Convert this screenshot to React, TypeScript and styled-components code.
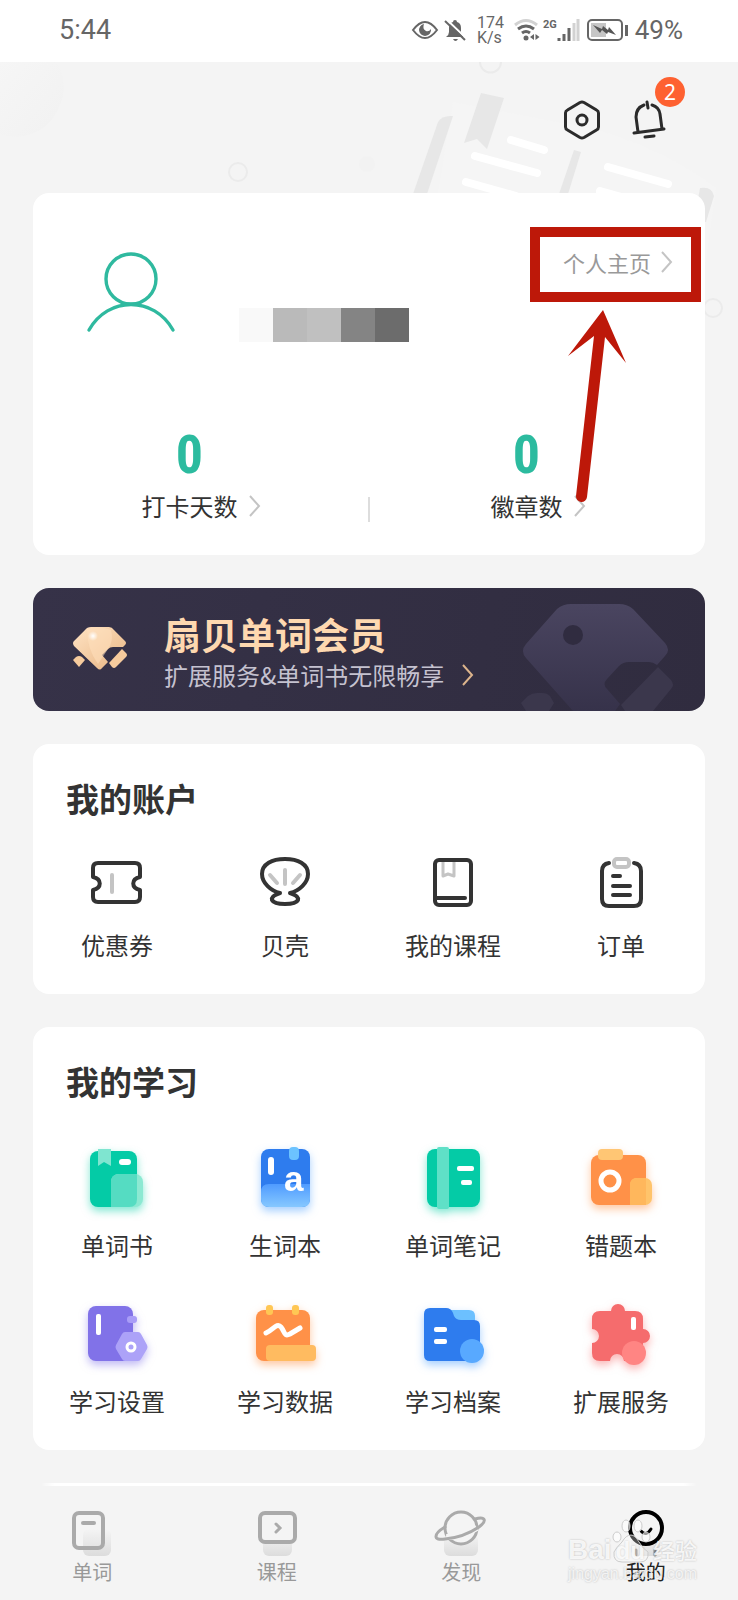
import React from 'react';
import styled, { createGlobalStyle } from 'styled-components';

const GlobalStyle = createGlobalStyle`
  * { box-sizing: border-box; }
  body {
    margin: 0;
    background: #f4f4f4;
    color: #333;
    font-family: "Noto Sans CJK SC", "Noto Sans", sans-serif;
    font-size: 24px;
    line-height: 32px;
  }
  button {
    border: 0;
    padding: 0;
    background: none;
    color: inherit;
    font: inherit;
    cursor: pointer;
  }
  a { color: inherit; text-decoration: none; }
  h2, p { margin: 0; }
  svg { display: block; flex: none; overflow: visible; }
`;

const Screen = styled.div`
  position: relative;
  display: flex;
  flex-direction: column;
  min-height: 100vh;
`;

const StatusBar = styled.header`
  display: flex;
  align-items: center;
  height: 62px;
  padding: 0 55px 2px 59px;
  background: #fff;
  color: #666;
  font-family: Roboto, sans-serif;
  font-size: 26px;
`;

const Clock = styled.time`
  font-size: 27px;
`;

const StatusIcons = styled.div`
  display: flex;
  align-items: center;
  gap: 7px;
  margin-left: auto;
`;

const NetSpeed = styled.div`
  display: grid;
  margin: 0 3px 0 4px;
  font-size: 16px;
  line-height: 15px;
`;

const Signal = styled.div`
  display: flex;
  align-items: flex-start;
  margin-left: -4px;
  font-size: 11px;
  font-weight: 700;
  line-height: 12px;
`;

const Body = styled.main`
  position: relative;
  padding: 0 33px;
`;

const Backdrop = styled.svg`
  position: absolute;
  top: 0;
  left: 0;
  width: 100%;
  height: 300px;
`;

const Toolbar = styled.div`
  position: relative;
  display: flex;
  justify-content: flex-end;
  align-items: center;
  gap: 28px;
  height: 131px;
  padding: 0 35px 16px 0;
`;

const ToolButton = styled.button`
  position: relative;
  width: 40px;
  height: 40px;
`;

const Badge = styled.span`
  position: absolute;
  top: -23px;
  right: -15px;
  width: 30px;
  height: 30px;
  border-radius: 50%;
  background: #fe6131;
  color: #fff;
  font-family: "Noto Sans", sans-serif;
  font-size: 21px;
  line-height: 31px;
  text-align: center;
`;

const Stack = styled.div`
  position: relative;
  display: flex;
  flex-direction: column;
  gap: 33px;
`;

const Card = styled.section`
  position: relative;
  border-radius: 16px;
  background: #fff;
  padding-bottom: 33px;
`;

const Profile = styled.div`
  display: flex;
  height: 149px;
  padding: 50px 33px 0 50px;
`;

const Mosaic = styled.div`
  display: flex;
  align-self: flex-end;
  margin-left: 60px;
`;

const Tile = styled.span<{ $tone: string }>`
  width: 34px;
  height: 34px;
  background: ${(p) => p.$tone};
`;

const ProfileLink = styled.a`
  position: relative;
  display: flex;
  align-items: center;
  gap: 10px;
  align-self: flex-start;
  height: 38px;
  margin-left: auto;
  color: #999;
  font-size: 22px;
  white-space: nowrap;
`;

const Highlight = styled.span`
  position: absolute;
  inset: -16px -29px -21px -33px;
  border: 10px solid #bd1809;
`;

const Pointer = styled.svg`
  position: absolute;
  top: 113px;
  right: 75px;
`;

const Stats = styled.div`
  display: grid;
  grid-template-columns: 1fr 2px 1fr;
  margin-top: 88px;
`;

const Stat = styled.button`
  display: grid;
  grid-template-columns: auto 11px;
  grid-template-areas:
    "value ."
    "label arrow";
  justify-content: center;
  justify-items: center;
  align-items: center;
  gap: 12px 11px;
`;

const StatValue = styled.strong`
  grid-area: value;
  height: 48px;
  color: #2cbb9f;
  font-family: "Liberation Sans Narrow", "Roboto Condensed", "Roboto", sans-serif;
  font-size: 54px;
  line-height: 50px;
`;

const StatLabel = styled.span`
  grid-area: label;
`;

const StatArrow = styled.span`
  grid-area: arrow;
`;

const StatRule = styled.span`
  align-self: end;
  height: 25px;
  background: #ddd;
`;

const Banner = styled.button`
  position: relative;
  display: flex;
  align-items: flex-start;
  gap: 37px;
  height: 123px;
  padding: 24px 40px 0;
  border-radius: 16px;
  overflow: hidden;
  background: linear-gradient(100deg, #363248, #302c3f);
  text-align: left;
`;

const BannerGem = styled.svg`
  margin-top: 15px;
`;

const BannerArt = styled.svg`
  position: absolute;
  right: 32px;
  bottom: 0;
`;

const BannerText = styled.span`
  display: grid;
  gap: 3px;
  color: #c5c2d0;
  white-space: nowrap;
`;

const BannerTitle = styled.strong`
  color: #fed8b0;
  font-size: 37px;
  line-height: 44px;
`;

const BannerLine = styled.span`
  display: flex;
  align-items: center;
  gap: 18px;
`;

const CardTitle = styled.h2`
  padding: 34px 33px 0;
  font-size: 33px;
  line-height: 40px;
`;

const Grid = styled.div<{ $top: number }>`
  display: grid;
  grid-template-columns: repeat(4, 1fr);
  row-gap: 37px;
  margin-top: ${(p) => p.$top}px;
`;

const Entry = styled.button<{ $gap: number }>`
  display: flex;
  flex-direction: column;
  align-items: center;
  gap: ${(p) => p.$gap}px;
`;

const NavRule = styled.div`
  height: 3px;
  margin: 33px 41px 0;
  background: linear-gradient(90deg, transparent, #fff 2%, #fff 98%, transparent);
`;

const Nav = styled.nav`
  display: grid;
  grid-template-columns: repeat(4, 1fr);
  padding: 23px 0 14px;
`;

const NavItem = styled.a<{ $active?: boolean }>`
  display: flex;
  flex-direction: column;
  align-items: center;
  gap: 1px;
  color: ${(p) => (p.$active ? '#222' : '#999')};
  font-size: 20px;
  line-height: 28px;
`;

const Watermark = styled.div`
  position: absolute;
  right: 41px;
  bottom: 17px;
  color: rgba(255, 255, 255, 0.85);
  font-family: "Liberation Sans", "Noto Sans CJK SC", sans-serif;
  text-shadow: 0 0 2px rgba(0, 0, 0, 0.25);
  pointer-events: none;
`;

const WatermarkLogo = styled.div`
  position: relative;
  display: flex;
  align-items: baseline;
  gap: 4px;
  font-size: 28px;
  font-weight: 700;
  line-height: 26px;
`;

const WatermarkDu = styled.span`
  font-size: 24px;
`;

const WatermarkCn = styled.span`
  margin-left: auto;
  font-size: 22px;
  font-weight: 500;
`;

const WatermarkUrl = styled.div`
  font-size: 16px;
  line-height: 18px;
  color: rgba(255, 255, 255, 0.75);
`;

const Paw = styled.svg`
  position: absolute;
  left: 45px;
  top: -18px;
`;

function Chevron({ color = '#c4c4c4' }: { color?: string }) {
  return (
    <svg width="11" height="22" viewBox="0 0 11 22" fill="none" stroke={color} strokeWidth="2" aria-hidden>
      <path d="M1 1l9 10-9 10" />
    </svg>
  );
}

function HeaderArt() {
  return (
    <Backdrop viewBox="0 0 738 300" preserveAspectRatio="xMidYMin slice" aria-hidden>
      <defs>
        <linearGradient id="orb" x1="0" y1="0" x2="1" y2="1">
          <stop offset="0" stopColor="#f6f6f6" />
          <stop offset="1" stopColor="#f1f1f1" />
        </linearGradient>
      </defs>
      <path d="M0 0H56Q66 14 63 34Q54 68 24 74Q10 76 0 72Z" fill="url(#orb)" />
      <path d="M453 40L598 68Q670 90 716 126L700 240H420Z" fill="#f5f5f5" />
      <g fill="#e7e7e7">
        <path d="M438 60Q442 53 453 54L427 132H413Z" />
        <path d="M481 31L504 36 487 87 477 77 464 81Z" />
        <path d="M574 88L581 90 568 132H559Z" />
        <path d="M700 126Q712 124 714 134L706 160H694Z" />
      </g>
      <g stroke="#fff" strokeWidth="8" strokeLinecap="round">
        <path d="M511 78l33 10M475 94l62 17M466 120l50 14M608 105l60 17M600 129l50 14" />
      </g>
      <g fill="none" stroke="#ebebeb" strokeWidth="2">
        <path d="M480 0A10 10 0 1 0 501 0" />
        <circle cx="238" cy="110" r="9" />
        <circle cx="713" cy="246" r="9" />
      </g>
      <circle cx="367" cy="102" r="8" fill="#f2f2f2" />
    </Backdrop>
  );
}

function EyeIcon() {
  return (
    <svg width="26" height="20" viewBox="0 0 26 20" aria-hidden>
      <path d="M1 10Q7 2 13 2T25 10Q19 18 13 18T1 10Z" fill="none" stroke="#666" strokeWidth="2" />
      <path d="M12 4a6 6 0 1 0 7 5q-2 3-5 2-4-2-2-7Z" fill="#666" />
    </svg>
  );
}

function MutedIcon() {
  return (
    <svg width="21" height="22" viewBox="0 0 21 22" aria-hidden>
      <path d="M1 18q3-2 3-5V9q0-5 4-6 0-2 2-2t2 2q4 1 4 6v4q0 3 3 5ZM8 20h5q-1 2-2.500 2T8 20Z" fill="#666" />
      <path d="M1 0l20 19" stroke="#fff" strokeWidth="2" />
      <path d="M0 2l20 19" stroke="#666" strokeWidth="2" />
    </svg>
  );
}

function WifiIcon() {
  return (
    <svg width="26" height="22" viewBox="0 0 26 22" fill="none" strokeWidth="3" aria-hidden>
      <path d="M1 6Q12-3 23 6" stroke="#d2d2d2" />
      <path d="M4 10q8-6 16 0M8 14q4-3 8 0" stroke="#666" />
      <circle cx="12" cy="19" r="2.500" fill="#666" />
      <path d="M20 15v6l-4-3ZM21.500 15v6l4-3Z" fill="#666" />
    </svg>
  );
}

function SignalIcon() {
  return (
    <svg width="23" height="22" viewBox="0 0 23 22" strokeWidth="3" aria-hidden>
      <path d="M2 22v-3M7 22v-7M12 22V9" stroke="#666" />
      <path d="M17 22V4M21 22V0" stroke="#d2d2d2" />
    </svg>
  );
}

function BatteryIcon() {
  return (
    <svg width="41" height="22" viewBox="0 0 41 22" aria-hidden>
      <rect x="4" y="4" width="15" height="14" fill="#c6c6c6" />
      <rect x="1" y="1" width="34" height="20" rx="4" fill="none" stroke="#666" strokeWidth="2" />
      <path d="M39.500 6v11" stroke="#666" strokeWidth="3" />
      <path d="M6 6l9 4 1-3 5 4 1-3 7 8-8-3-1 2-5-4-2 3Z" fill="#555" />
    </svg>
  );
}

function HexIcon() {
  return (
    <svg width="40" height="40" viewBox="0 0 40 40" fill="none" stroke="#2b2b2b" strokeWidth="3" strokeLinejoin="round" aria-hidden>
      <path d="M18 2.500Q20 1.500 22 2.500L34.500 10Q36.500 11 36.500 13V27Q36.500 29 34.500 30L22 37.500Q20 38.500 18 37.500L5.500 30Q3.500 29 3.500 27V13Q3.500 11 5.500 10Z" />
      <circle cx="20" cy="20" r="5" />
    </svg>
  );
}

function BellIcon() {
  return (
    <svg width="40" height="40" viewBox="0 0 40 40" fill="none" stroke="#2b2b2b" strokeWidth="3" strokeLinecap="round" aria-hidden>
      <path d="M4 33l30-4M8 32L6 17Q6 8 14 5M32 29L30 14Q29 7 22 5M17 2l1 6" />
      <path d="M15 37l9-1" />
    </svg>
  );
}

function AvatarIcon() {
  return (
    <svg width="96" height="96" viewBox="0 0 96 96" fill="none" stroke="#2fb99f" strokeWidth="3.400" strokeLinecap="round" role="img" aria-label="头像">
      <circle cx="48" cy="36" r="25" />
      <path d="M6 87C25 53 71 53 90 87" />
    </svg>
  );
}

function Gem() {
  return (
    <BannerGem width="54" height="44" viewBox="0 0 54 44" aria-hidden>
      <defs>
        <linearGradient id="gem" x1="0" y1="0" x2="1" y2="1">
          <stop offset="0" stopColor="#ffe3c4" />
          <stop offset="1" stopColor="#e8b582" />
        </linearGradient>
        <radialGradient id="shine">
          <stop offset="0" stopColor="#fff" />
          <stop offset="1" stopColor="#fff" stopOpacity="0" />
        </radialGradient>
      </defs>
      <path d="M12 3Q14 0 18 0H36Q39 0 41 3L52 14Q54 16 52 18L50 20H40Q37 20 35 22L29 28 35 35 29 41Q27 44 24 41L1 19Q-1 16 1 14Z" fill="url(#gem)" />
      <path d="M14 2Q25-2 38 3 41 14 35 22L25 37Q14 22 14 2Z" fill="#ffe0bd" opacity=".55" />
      <path d="M49 22L53 26Q55 28 53 30L43 40Q41 42 39 40L36 36Z" fill="#f6cb9d" />
      <path d="M3 30Q6 28 9 30L12 33 6 40 0 33Z" fill="#f6cb9d" />
      <circle cx="20" cy="9" r="5" fill="url(#shine)" />
    </BannerGem>
  );
}

function GemShadow() {
  return (
    <BannerArt width="152" height="108" viewBox="0 0 152 108" aria-hidden>
      <defs>
        <linearGradient id="dusk" x1="0" y1="0" x2="0" y2="1">
          <stop offset="0" stopColor="#4a4560" />
          <stop offset="1" stopColor="#36324a" />
        </linearGradient>
      </defs>
      <path d="M36 6Q42 1 50 1H98Q106 1 112 6L144 40Q150 47 144 53L136 62Q132 59 128 59H108Q102 59 98 63L86 76Q81 81 86 86L99 101 94 108H52L5 55Q-1 48 5 41Z" fill="url(#dusk)" />
      <circle cx="52" cy="32" r="10" fill="#302c40" />
      <path d="M137 64L150 77Q154 82 150 86L132 108H104L100 102Z" fill="#3b374c" />
      <path d="M0 100L7 93Q11 90 16 90H21Q26 90 29 93L33 100 28 108H5Z" fill="#3b374c" />
    </BannerArt>
  );
}

const lineIcon = { width: 56, height: 56, viewBox: '0 0 56 56', fill: 'none', strokeWidth: 4, strokeLinecap: 'round', strokeLinejoin: 'round', 'aria-hidden': true } as const;
const ink = '#333';
const soft = '#c4c4c4';

const accountItems = [
  {
    label: '优惠券',
    icon: (
      <svg {...lineIcon}>
        <path stroke={ink} d="M4 22V13Q4 8 9 8H46Q51 8 51 13V22C42 24 42 33 51 35V42Q51 47 46 47H9Q4 47 4 42V35C13 33 13 24 4 22Z" />
        <path stroke={soft} d="M23 20v17" />
      </svg>
    ),
  },
  {
    label: '贝壳',
    icon: (
      <svg {...lineIcon}>
        <path stroke={ink} d="M23 38C14 36 5 28 5 19C5 9 15 4 28 4S51 9 51 19C51 28 42 36 33 38Q42 41 41 45Q39 49 28 49T15 45Q14 41 23 38" />
        <path stroke={soft} d="M28 15v14M13 20l7 8M43 20l-7 8" />
      </svg>
    ),
  },
  {
    label: '我的课程',
    icon: (
      <svg {...lineIcon}>
        <path stroke={soft} strokeWidth="3" d="M18 7V21l5-2 6 2V7" />
        <rect stroke={ink} x="10" y="5" width="36" height="45" rx="4" />
        <path stroke={ink} d="M11 43h29" />
      </svg>
    ),
  },
  {
    label: '订单',
    icon: (
      <svg {...lineIcon}>
        <path stroke={ink} d="M16 8Q9 9 9 16V44Q9 51 16 51H41Q48 51 48 44V16Q48 9 41 8" />
        <rect stroke={soft} x="21" y="4" width="15" height="8" rx="3" />
        <path stroke={ink} d="M20 21h7M20 31h17M20 40h17" />
      </svg>
    ),
  },
];

const GlowSvg = styled.svg<{ $glow: string }>`
  filter: drop-shadow(0 4px 4px ${(p) => p.$glow});
`;

function Tinted({ glow, children }: { glow: string; children: React.ReactNode }) {
  return (
    <GlowSvg $glow={glow} width="72" height="72" viewBox="0 0 72 72" aria-hidden>
      {children}
    </GlowSvg>
  );
}

const studyItems = [
  {
    label: '单词书',
    icon: (
      <Tinted glow="#04cfa680">
        <rect x="9" y="9" width="47" height="56" rx="8" fill="#04cba6" />
        <rect x="30" y="32" width="32" height="33" rx="8" fill="#8ce9d2" />
        <path d="M30 65V40Q30 32 38 32H56V57Q56 65 48 65Z" fill="#55dcc2" />
        <path d="M17 7H30V24L23 20 17 24Z" fill="#7fe5d0" />
        <rect x="38" y="17" width="12" height="6" rx="3" fill="#fff" />
      </Tinted>
    ),
  },
  {
    label: '生词本',
    icon: (
      <Tinted glow="#4ba0ff80">
        <defs>
          <linearGradient id="page" x1="0" y1="0" x2="0" y2="1">
            <stop offset="0" stopColor="#4f9bff" />
            <stop offset="1" stopColor="#86c8ff" />
          </linearGradient>
        </defs>
        <rect x="12" y="7" width="49" height="58" rx="8" fill="#2e7cee" />
        <path d="M12 50Q12 42 20 42H61V57Q61 65 53 65H20Q12 65 12 57Z" fill="url(#page)" />
        <rect x="40" y="5" width="10" height="13" rx="4" fill="#6cc3ff" />
        <rect x="19" y="15" width="6" height="18" rx="3" fill="#fff" />
        <text x="35" y="49" fill="#fff" fontFamily="Liberation Sans, sans-serif" fontSize="35" fontWeight="700">a</text>
      </Tinted>
    ),
  },
  {
    label: '单词笔记',
    icon: (
      <Tinted glow="#04cfa680">
        <rect x="10" y="7" width="53" height="58" rx="8" fill="#04cba6" />
        <rect x="20" y="5" width="12" height="62" rx="2" fill="#5fe0c7" />
        <rect x="40" y="24" width="17" height="5" rx="2" fill="#fff" />
        <rect x="44" y="38" width="11" height="5" rx="2" fill="#fff" />
      </Tinted>
    ),
  },
  {
    label: '错题本',
    icon: (
      <Tinted glow="#ff914680">
        <rect x="6" y="13" width="55" height="50" rx="8" fill="#ff9148" />
        <rect x="45" y="36" width="22" height="27" rx="7" fill="#ffc46b" />
        <path d="M45 63V43Q45 36 52 36H61V63Z" fill="#ffb75c" />
        <rect x="13" y="7" width="25" height="11" rx="4" fill="#ffc674" />
        <circle cx="25" cy="39" r="9" fill="none" stroke="#fff" strokeWidth="5" />
      </Tinted>
    ),
  },
  {
    label: '学习设置',
    icon: (
      <Tinted glow="#8273ea80">
        <rect x="7" y="8" width="45" height="55" rx="8" fill="#8172e8" />
        <rect x="15" y="16" width="5" height="21" rx="2" fill="#fff" />
        <rect x="46" y="18" width="10" height="7" rx="3" fill="#a99df7" />
        <path d="M44 34H57Q59 34 60 36L66 47Q67 49 66 51L60 61Q59 63 57 63H44Q42 63 41 61L35 51Q34 49 35 47L41 36Q42 34 44 34Z" fill="#aca2f8" />
        <circle cx="50" cy="49" r="4" fill="none" stroke="#fff" strokeWidth="3" />
      </Tinted>
    ),
  },
  {
    label: '学习数据',
    icon: (
      <Tinted glow="#ff914680">
        <rect x="7" y="12" width="54" height="51" rx="8" fill="#ff9148" />
        <rect x="17" y="47" width="50" height="16" rx="4" fill="#ffbb60" />
        <rect x="17" y="7" width="7" height="10" rx="3" fill="#ffc754" />
        <rect x="43" y="7" width="7" height="10" rx="3" fill="#ffc754" />
        <path d="M17 35C24 32 28 24 32 29S35 39 41 36L51 30" fill="none" stroke="#fff" strokeWidth="5" strokeLinecap="round" />
      </Tinted>
    ),
  },
  {
    label: '学习档案',
    icon: (
      <Tinted glow="#4ba0ff80">
        <path d="M34 12H52Q58 12 58 18V30H34Z" fill="#6cc0ff" />
        <path d="M7 16Q7 10 13 10H29Q34 10 36 15L37 18Q39 22 44 22H57Q63 22 63 28V57Q63 63 57 63H13Q7 63 7 57Z" fill="#2e7cee" />
        <rect x="17" y="29" width="13" height="5" rx="2" fill="#fff" />
        <rect x="17" y="41" width="13" height="5" rx="2" fill="#fff" />
        <circle cx="55" cy="53" r="12" fill="#58a9ff" />
      </Tinted>
    ),
  },
  {
    label: '扩展服务',
    icon: (
      <Tinted glow="#f66e6e80">
        <path d="M15 13H26A7 7 0 0 1 40 13H50Q58 13 58 21V31A7 7 0 0 1 58 45V63H39A7 7 0 0 0 25 63H15Q7 63 7 55V45A7 7 0 0 0 7 31V21Q7 13 15 13Z" fill="#f56c6d" />
        <circle cx="49" cy="55" r="12" fill="#ff8583" />
        <rect x="46" y="19" width="5" height="13" rx="2" fill="#fff" />
      </Tinted>
    ),
  },
];

const navIcon = { width: 48, height: 48, viewBox: '0 0 48 48', fill: 'none', strokeWidth: 4, stroke: '#aaa', strokeLinecap: 'round', 'aria-hidden': true } as const;

const navItems = [
  {
    label: '单词',
    icon: (
      <svg {...navIcon}>
        <defs>
          <linearGradient id="fade" x1="0" y1="0" x2="0" y2="1">
            <stop offset="0" stopColor="#f4f4f4" />
            <stop offset="1" stopColor="#dcdcdc" />
          </linearGradient>
        </defs>
        <rect x="15" y="20" width="28" height="27" rx="6" fill="url(#fade)" stroke="none" />
        <rect x="6" y="4" width="29" height="35" rx="5" />
        <path d="M15 14h11" />
      </svg>
    ),
  },
  {
    label: '课程',
    icon: (
      <svg {...navIcon}>
        <rect x="10" y="25" width="29" height="22" rx="6" fill="url(#fade)" stroke="none" />
        <rect x="7" y="4" width="35" height="29" rx="5" fill="#f4f4f4" />
        <path d="M23 15l4 4-4 4" strokeWidth="3" />
      </svg>
    ),
  },
  {
    label: '发现',
    icon: (
      <svg {...navIcon} strokeWidth="3">
        <rect x="7" y="25" width="34" height="22" rx="6" fill="url(#fade)" stroke="none" />
        <circle cx="24" cy="19" r="16" fill="#f4f4f4" />
        <path d="M9 28Q24 29 40 19" stroke="#f4f4f4" strokeWidth="6" strokeLinecap="butt" />
        <path d="M8 18C-4 25-4 32 8 30 20 29 33 24 42 18 50 12 49 7 38 10" />
      </svg>
    ),
  },
  {
    label: '我的',
    active: true,
    icon: (
      <svg {...navIcon} stroke="#000">
        <rect x="9" y="27" width="29" height="20" rx="6" fill="url(#fade)" stroke="none" />
        <circle cx="24" cy="19" r="16" fill="#f4f4f4" />
        <path d="M19 22q5 6 10-2" strokeWidth="3" />
        <path d="M14 41v5M33 41v5" stroke="#888" strokeWidth="3" />
      </svg>
    ),
  },
];

export default function App() {
  return (
    <Screen>
      <GlobalStyle />
      <StatusBar>
        <Clock>5:44</Clock>
        <StatusIcons>
          <EyeIcon />
          <MutedIcon />
          <NetSpeed>
            <span>174</span>
            <span>K/s</span>
          </NetSpeed>
          <WifiIcon />
          <Signal>2G<SignalIcon /></Signal>
          <BatteryIcon />
          <span>49%</span>
        </StatusIcons>
      </StatusBar>

      <Body>
        <HeaderArt />
        <Toolbar>
          <ToolButton aria-label="设置"><HexIcon /></ToolButton>
          <ToolButton aria-label="消息"><BellIcon /><Badge>2</Badge></ToolButton>
        </Toolbar>

        <Stack>
          <Card>
            <Profile>
              <AvatarIcon />
              <Mosaic>
                {['#f9f9f9', '#bababa', '#c0c0c0', '#848484', '#6c6c6c'].map((tone) => (
                  <Tile key={tone} $tone={tone} />
                ))}
              </Mosaic>
              <ProfileLink href="#profile">
                个人主页
                <Chevron />
                <Highlight />
              </ProfileLink>
            </Profile>
            <Stats>
              <Stat>
                <StatValue>0</StatValue>
                <StatLabel>打卡天数</StatLabel>
                <StatArrow><Chevron /></StatArrow>
              </Stat>
              <StatRule />
              <Stat>
                <StatValue>0</StatValue>
                <StatLabel>徽章数</StatLabel>
                <StatArrow><Chevron /></StatArrow>
              </Stat>
            </Stats>
            <Pointer width="65" height="200" viewBox="0 0 65 200" fill="#bd1809" aria-hidden>
              <path d="M38 4L61 57 40 31 22 191A5.400 5.400 0 0 1 11 190L29 30 3 50Z" />
            </Pointer>
          </Card>

          <Banner>
            <Gem />
            <BannerText>
              <BannerTitle>扇贝单词会员</BannerTitle>
              <BannerLine>
                扩展服务&amp;单词书无限畅享
                <Chevron color="#dcb48c" />
              </BannerLine>
            </BannerText>
            <GemShadow />
          </Banner>

          <Card>
            <CardTitle>我的账户</CardTitle>
            <Grid $top={37}>
              {accountItems.map((item) => (
                <Entry key={item.label} $gap={18}>
                  {item.icon}
                  {item.label}
                </Entry>
              ))}
            </Grid>
          </Card>

          <Card>
            <CardTitle>我的学习</CardTitle>
            <Grid $top={41}>
              {studyItems.map((item) => (
                <Entry key={item.label} $gap={15}>
                  {item.icon}
                  {item.label}
                </Entry>
              ))}
            </Grid>
          </Card>
        </Stack>
      </Body>

      <NavRule />
      <Nav>
        {navItems.map((item) => (
          <NavItem key={item.label} href="#" $active={item.active} aria-current={item.active ? 'page' : undefined}>
            {item.icon}
            {item.label}
          </NavItem>
        ))}
      </Nav>

      <Watermark>
        <WatermarkLogo>
          <Paw width="36" height="44" viewBox="0 0 36 44" fill="#fff" fillOpacity=".6" stroke="#ccc" aria-hidden>
            <ellipse cx="4" cy="18" rx="4" ry="5" />
            <ellipse cx="13" cy="7" rx="4" ry="6" />
            <ellipse cx="25" cy="7" rx="4" ry="6" />
            <ellipse cx="33" cy="18" rx="4" ry="5" />
            <path d="M18 16Q22 16 26 23T35 33Q36 43 27 43H9Q0 43 1 33 3 29 9 23 13 16 18 16Z" fillOpacity=".3" />
          </Paw>
          <span>Bai</span>
          <WatermarkDu>du</WatermarkDu>
          <WatermarkCn>经验</WatermarkCn>
        </WatermarkLogo>
        <WatermarkUrl>jingyan.baidu.com</WatermarkUrl>
      </Watermark>
    </Screen>
  );
}
